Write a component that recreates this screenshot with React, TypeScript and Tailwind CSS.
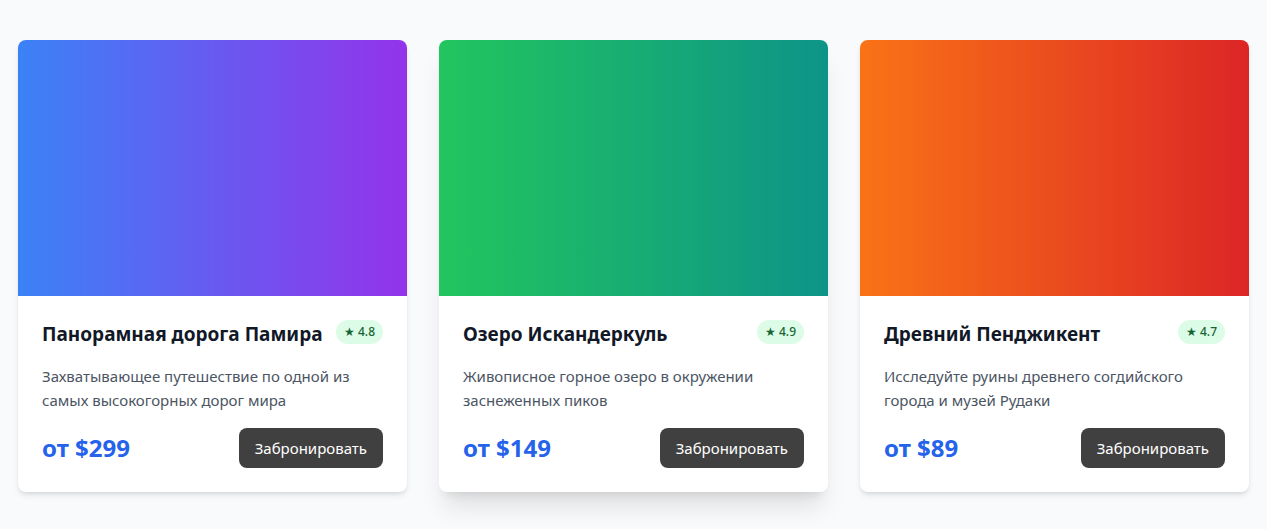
const tours = [
  {
    title: "Панорамная дорога Памира",
    rating: "4.8",
    text: "Захватывающее путешествие по одной из самых высокогорных дорог мира",
    price: "от $299",
    gradient: "bg-linear-to-r/srgb from-[#3b82f6] to-[#9333ea]",
    shadow: "shadow-md",
  },
  {
    title: "Озеро Искандеркуль",
    rating: "4.9",
    text: "Живописное горное озеро в окружении заснеженных пиков",
    price: "от $149",
    gradient: "bg-linear-to-r/srgb from-[#22c55e] to-[#0d9488]",
    shadow: "shadow-xl",
  },
  {
    title: "Древний Пенджикент",
    rating: "4.7",
    text: "Исследуйте руины древнего согдийского города и музей Рудаки",
    price: "от $89",
    gradient: "bg-linear-to-r/srgb from-[#f97316] to-[#dc2626]",
    shadow: "shadow-md",
  },
];

export default function App() {
  return (
    <div className="min-h-screen bg-[#f9fafb] px-[18px] pt-10 font-['Noto_Sans',sans-serif]">
      <div className="grid grid-cols-3 gap-8">
        {tours.map((t) => (
          <div key={t.title} className={`overflow-hidden rounded-lg bg-white ${t.shadow}`}>
            <div className={`h-64 ${t.gradient}`} />
            <div className="p-6">
              <div className="mb-4 flex items-start justify-between">
                <h3 className="text-[19px] font-bold leading-7 text-[#111827]">{t.title}</h3>
                <span className="rounded-full bg-[#dcfce7] px-2 py-0.5 text-xs font-medium leading-5 text-[#166534]">
                  ★ {t.rating}
                </span>
              </div>
              <p className="mb-4 text-[15px] leading-6 text-[#4b5563]">{t.text}</p>
              <div className="flex items-center justify-between">
                <span className="text-2xl font-bold text-[#2563eb]">{t.price}</span>
                <button className="rounded-lg bg-[#404040] px-4 py-2 text-[15px] leading-6 text-white">
                  Забронировать
                </button>
              </div>
            </div>
          </div>
        ))}
      </div>
    </div>
  );
}
